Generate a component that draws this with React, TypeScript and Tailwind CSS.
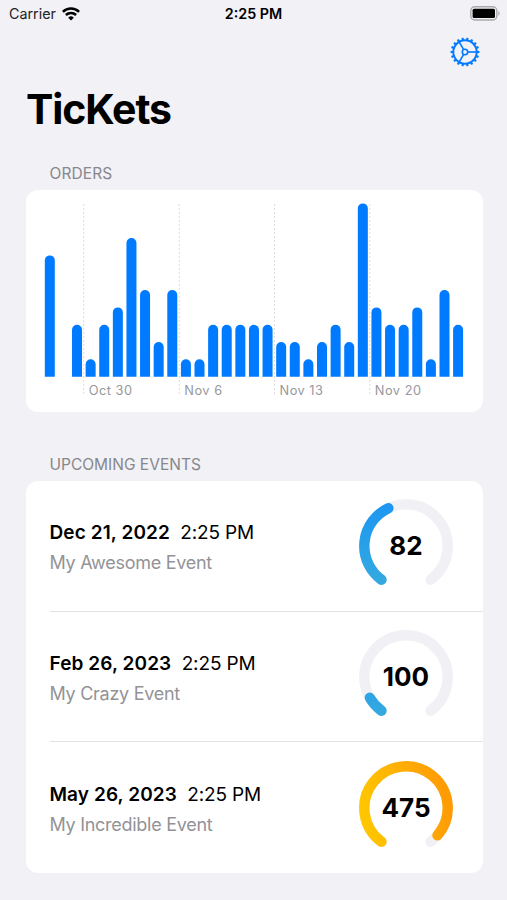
const orders = [7, 0, 3, 1, 3, 4, 8, 5, 2, 5, 1, 1, 3, 3, 3, 3, 3, 2, 2, 1, 2, 3, 2, 10, 4, 3, 3, 4, 1, 5, 3];

const weeks = [
  { x: 57.7, label: 'Oct 30' },
  { x: 153.3, label: 'Nov 6' },
  { x: 248.5, label: 'Nov 13' },
  { x: 343.8, label: 'Nov 20' },
];

const events = [
  { date: 'Dec 21, 2022', time: '2:25 PM', name: 'My Awesome Event', sold: 82, progress: 0.413, color: 'blue' },
  { date: 'Feb 26, 2023', time: '2:25 PM', name: 'My Crazy Event', sold: 100, progress: 0.084, color: 'blue' },
  { date: 'May 26, 2023', time: '2:25 PM', name: 'My Incredible Event', sold: 475, progress: 0.955, color: 'orange' },
];

function WifiIcon() {
  return (
    <svg width="18" height="14" viewBox="0 0 18 14" fill="none" stroke="#000" strokeWidth="2.5">
      <path d="M0.9 4.9a11.4 11.4 0 0 1 16.2 0" />
      <path d="M3.9 8a7.2 7.2 0 0 1 10.2 0" />
      <path d="M9 13.6 6.2 10.7a4 4 0 0 1 5.6 0Z" fill="#000" stroke="none" />
    </svg>
  );
}

function BatteryIcon() {
  return (
    <svg width="31" height="15" viewBox="0 0 31 15">
      <rect x="0.8" y="0.8" width="26" height="13.2" rx="4" fill="none" stroke="#aaaaad" strokeWidth="1.4" />
      <rect x="2.6" y="2.8" width="22.4" height="9.2" rx="1.5" fill="#000" />
      <path d="M28.3 5c1.8.7 1.8 4.1 0 4.8Z" fill="#aaaaad" />
    </svg>
  );
}

function GearIcon() {
  const teeth = Array.from({ length: 18 }, (_, i) => i * 20);
  return (
    <svg width="30" height="30" viewBox="-15 -15 30 30" fill="none" stroke="#007aff">
      <circle r="11.7" strokeWidth="1.9" />
      <circle r="2.7" strokeWidth="1.6" />
      {teeth.map((a) => (
        <path key={a} d="M12 0H14.4" strokeWidth="2.2" transform={`rotate(${a})`} />
      ))}
      {[0, 120, 240].map((a) => (
        <path key={a} d="M3 0H12" strokeWidth="1.6" transform={`rotate(${a})`} />
      ))}
    </svg>
  );
}

function OrdersChart() {
  const base = 186.7;
  return (
    <svg width="457" height="222" viewBox="0 0 457 222" className="block">
      {weeks.map((w) => (
        <g key={w.label}>
          <line x1={w.x} x2={w.x} y1="14" y2="206" stroke="#dcdce0" strokeWidth="1" strokeDasharray="2 2" />
          <text x={w.x + 5} y="204.6" fontSize="12.8" letterSpacing="0.5" fill="#98989c">{w.label}</text>
        </g>
      ))}
      {orders.map((n, i) => {
        if (!n) return null;
        const x = 18.8 + i * 13.61;
        const top = base - n * 17.33;
        return <path key={i} fill="#007aff" d={`M${x} ${base}V${top + 5}a5 5 0 0 1 10 0V${base}Z`} />;
      })}
    </svg>
  );
}

function arc(progress: number) {
  const r = 41.7;
  const start = (126 * Math.PI) / 180;
  const end = start + (288 * progress * Math.PI) / 180;
  const large = 288 * progress > 180 ? 1 : 0;
  return `M${r * Math.cos(start)} ${r * Math.sin(start)}A${r} ${r} 0 ${large} 1 ${r * Math.cos(end)} ${r * Math.sin(end)}`;
}

function Gauge({ value, progress, color }: { value: number; progress: number; color: string }) {
  return (
    <svg width="94" height="94" viewBox="-47 -47 94 94" fill="none" strokeWidth="10.4" strokeLinecap="round">
      <defs>
        <linearGradient id="blue" gradientUnits="userSpaceOnUse" x1="0" y1="-47" x2="0" y2="40">
          <stop offset="0" stopColor="#1b95f3" />
          <stop offset="1" stopColor="#34aadf" />
        </linearGradient>
        <linearGradient id="orange" gradientUnits="userSpaceOnUse" x1="-44" y1="20" x2="44" y2="0">
          <stop offset="0" stopColor="#ffc800" />
          <stop offset="1" stopColor="#ff9b05" />
        </linearGradient>
      </defs>
      <path d={arc(1)} stroke="#f1f1f5" />
      <path d={arc(progress)} stroke={`url(#${color})`} />
      <text y="9.3" textAnchor="middle" fontSize="26" fontWeight="700" fill="#000">{value}</text>
    </svg>
  );
}

export default function App() {
  return (
    <main className="h-[900px] w-[507px] overflow-hidden bg-[#f1f1f6] font-['Inter',sans-serif] text-black">
      <header className="grid h-7 grid-cols-3 items-center pl-[9px] pr-[6px] text-sm">
        <div className="flex items-center gap-1.5 text-[#222225]">
          <span className="text-[14.3px]">Carrier</span>
          <WifiIcon />
        </div>
        <span className="pr-[3px] text-center text-[14.3px] font-semibold">2:25 PM</span>
        <div className="flex justify-end pb-0.5">
          <BatteryIcon />
        </div>
      </header>

      <div className="flex h-12 items-center justify-end pr-[27px]">
        <button aria-label="Settings"><GearIcon /></button>
      </div>

      <h1 className="h-16 pl-[26px] text-[41px] font-bold leading-[66px] tracking-[-1.1px]">TicKets</h1>

      <section className="px-[25.5px]">
        <h2 className="flex h-[50.4px] items-end pb-1.5 pl-6 text-[15.5px] leading-5 tracking-[0.1px] text-[#87878c]">ORDERS</h2>
        <div className="h-[222px] w-[457px] rounded-xl bg-white">
          <OrdersChart />
        </div>
      </section>

      <section className="px-[25.5px]">
        <h2 className="flex h-[68.6px] items-end pb-1.5 pl-6 text-[15.5px] leading-5 text-[#87878c]">UPCOMING EVENTS</h2>
        <ul className="w-[457px] rounded-xl bg-white pl-6">
          {events.map((e) => (
            <li key={e.name} className="flex h-[130.7px] items-center justify-between border-b border-[#e3e3e6] pr-[29.5px] last:border-b-0">
              <div className="pt-[5px]">
                <p className="whitespace-pre text-[19px] leading-[30px]">
                  <span className="font-semibold tracking-[0.1px]">{e.date}</span>
                  <span className="tracking-[-0.15px]">{'  '}{e.time}</span>
                </p>
                <p className="text-[18px] leading-[30px] tracking-[-0.28px] text-[#939397]">{e.name}</p>
              </div>
              <Gauge value={e.sold} progress={e.progress} color={e.color} />
            </li>
          ))}
        </ul>
      </section>
    </main>
  );
}
